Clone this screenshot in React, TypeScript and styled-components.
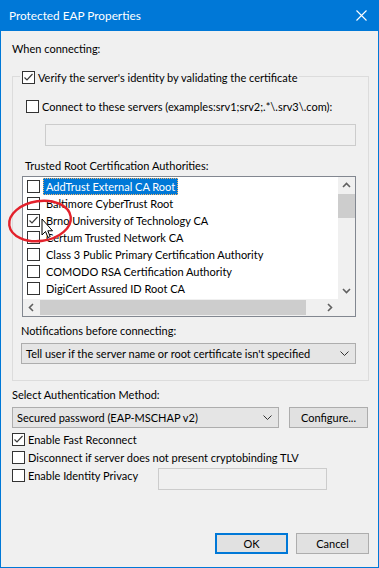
import styled, { createGlobalStyle } from "styled-components";

const GlobalStyle = createGlobalStyle`
  html, body {
    margin: 0;
    padding: 0;
    background: #f0f0f0;
  }
  body {
    font-family: Lato, "Liberation Sans", Arial, sans-serif;
    font-size: 11px;
    color: #000;
  }
  * { box-sizing: border-box; }
`;

const Window = styled.div`
  position: relative;
  width: 379px;
  height: 568px;
  border: 1px solid #0078d7;
  border-top: none;
  background: #f0f0f0;
  display: flex;
  flex-direction: column;
  overflow: hidden;
`;

const TitleBar = styled.div`
  height: 31px;
  background: #0078d7;
  color: #fff;
  display: flex;
  align-items: center;
  justify-content: space-between;
  padding: 0 11px 0 8px;
  font-size: 11.8px;
`;

const Body = styled.div`
  flex: 1;
  display: flex;
  flex-direction: column;
  padding: 0 9px 13px 11px;
`;

const Label = styled.div<{ $mt?: number; $ml?: number }>`
  height: 16px;
  line-height: 16px;
  white-space: nowrap;
  margin-top: ${(p) => p.$mt ?? 0}px;
  margin-left: ${(p) => p.$ml ?? 0}px;
`;

const GroupBox = styled.div`
  position: relative;
  margin-top: 19px;
  border: 1px solid #dcdcdc;
  padding: 0 12px 16px 8px;
  display: flex;
  flex-direction: column;
`;

/* legend sits over the group border */
const Legend = styled.div`
  position: absolute;
  top: -8px;
  left: 7px;
  padding: 0 2px;
  background: #f0f0f0;
`;

const CheckRow = styled.label<{ $mt?: number; $ml?: number; $w?: number }>`
  display: flex;
  align-items: center;
  gap: 2px;
  height: 16px;
  white-space: nowrap;
  flex-shrink: 0;
  margin-top: ${(p) => p.$mt ?? 0}px;
  margin-left: ${(p) => p.$ml ?? 0}px;
  ${(p) => (p.$w ? `width: ${p.$w}px;` : "")}
`;

const Box = styled.span`
  width: 13px;
  height: 13px;
  flex-shrink: 0;
  border: 1px solid #333;
  background: #fff;
  display: flex;
  align-items: center;
  justify-content: center;
  margin-right: 1px;
`;

const TextField = styled.div<{ $w: number; $mt?: number; $ml?: number }>`
  width: ${(p) => p.$w}px;
  height: 22px;
  flex-shrink: 0;
  border: 1px solid #cccccc;
  background: #f0f0f0;
  margin-top: ${(p) => p.$mt ?? 0}px;
  margin-left: ${(p) => p.$ml ?? 0}px;
`;

const ListBox = styled.div`
  width: 334px;
  height: 141px;
  margin-top: 2px;
  margin-left: 1px;
  border: 1px solid #828790;
  background: #fff;
  display: grid;
  grid-template-columns: 1fr 17px;
  grid-template-rows: 1fr 17px;
`;

const Items = styled.div`
  overflow: hidden;
  padding: 1px 0 0 4px;
`;

const Item = styled.div`
  height: 17px;
  display: flex;
  align-items: center;
  white-space: nowrap;
`;

const ItemText = styled.span<{ $selected?: boolean }>`
  margin-left: 2px;
  padding: 0 2px;
  height: 17px;
  line-height: 15px;
  border: 1px ${(p) => (p.$selected ? "dotted #f5b66a" : "solid transparent")};
  background: ${(p) => (p.$selected ? "#0078d7" : "transparent")};
  color: ${(p) => (p.$selected ? "#fff" : "#000")};
`;

const VScroll = styled.div`
  background: #f0f0f0;
  display: flex;
  flex-direction: column;
`;

const HScroll = styled.div`
  background: #f0f0f0;
  display: flex;
`;

const Arrow = styled.div`
  width: 17px;
  height: 17px;
  flex-shrink: 0;
  display: flex;
  align-items: center;
  justify-content: center;
`;

const Thumb = styled.div<{ $len: number; $vertical?: boolean }>`
  background: #cdcdcd;
  flex-shrink: 0;
  ${(p) =>
    p.$vertical
      ? `height: ${p.$len}px; width: 17px;`
      : `width: ${p.$len}px; height: 15px; margin-top: 1px;`}
`;

const Spacer = styled.div`
  flex: 1;
`;

const Corner = styled.div`
  background: #f0f0f0;
`;

const Combo = styled.div<{ $w: number; $mt?: number }>`
  width: ${(p) => p.$w}px;
  height: 21px;
  flex-shrink: 0;
  margin-top: ${(p) => p.$mt ?? 0}px;
  border: 1px solid #adadad;
  background: #e5e5e5;
  display: flex;
  align-items: center;
  justify-content: space-between;
  padding: 0 6px 0 4px;
  white-space: nowrap;
`;

const Row = styled.div<{ $mt?: number }>`
  display: flex;
  align-items: flex-start;
  gap: 10px;
  margin-top: ${(p) => p.$mt ?? 0}px;
`;

const Button = styled.div<{ $w: number; $default?: boolean }>`
  width: ${(p) => p.$w}px;
  height: 21px;
  flex-shrink: 0;
  display: flex;
  align-items: center;
  justify-content: center;
  background: #e1e1e1;
  border: ${(p) => (p.$default ? "2px solid #0078d7" : "1px solid #adadad")};
`;

const Footer = styled.div`
  margin-top: auto;
  display: flex;
  justify-content: flex-end;
  gap: 8px;
`;

const Markup = styled.svg`
  position: absolute;
  left: 0;
  top: 0;
  pointer-events: none;
`;

const Check = ({ checked }: { checked?: boolean }) => (
  <Box>
    {checked && (
      <svg width="11" height="11" viewBox="0 0 11 11">
        <path d="M1.5 5.5 L4 8 L9.5 2" fill="none" stroke="#3c3c3c" strokeWidth="1.2" />
      </svg>
    )}
  </Box>
);

const Chevron = ({ dir, color = "#606060" }: { dir: "up" | "down" | "left" | "right"; color?: string }) => {
  const d = {
    up: "M1 6 L4.5 2.5 L8 6",
    down: "M1 3 L4.5 6.5 L8 3",
    left: "M6 1 L2.5 4.5 L6 8",
    right: "M3 1 L6.5 4.5 L3 8",
  }[dir];
  return (
    <svg width="9" height="9" viewBox="0 0 9 9">
      <path d={d} fill="none" stroke={color} strokeWidth="1.6" />
    </svg>
  );
};

const ComboArrow = () => (
  <svg width="9" height="5" viewBox="0 0 9 5">
    <path d="M0.5 0.5 L4.5 4.5 L8.5 0.5" fill="none" stroke="#333" strokeWidth="1" />
  </svg>
);

const cas = [
  { name: "AddTrust External CA Root", checked: false, selected: true },
  { name: "Baltimore CyberTrust Root", checked: false },
  { name: "Brno University of Technology CA", checked: true },
  { name: "Certum Trusted Network CA", checked: false },
  { name: "Class 3 Public Primary Certification Authority", checked: false },
  { name: "COMODO RSA Certification Authority", checked: false },
  { name: "DigiCert Assured ID Root CA", checked: false },
];

export default function App() {
  return (
    <>
      <GlobalStyle />
      <Window>
        <TitleBar>
          <span>Protected EAP Properties</span>
          <svg width="11" height="11" viewBox="0 0 11 11">
            <path d="M0.5 0.5 L10.5 10.5 M10.5 0.5 L0.5 10.5" stroke="#fff" strokeWidth="1.1" />
          </svg>
        </TitleBar>
        <Body>
          <Label $mt={10}>When connecting:</Label>
          <GroupBox>
            <Legend>
              <CheckRow>
                <Check checked />
                Verify the server's identity by validating the certificate
              </CheckRow>
            </Legend>
            <CheckRow $mt={21} $ml={5}>
              <Check />
              Connect to these servers (examples:srv1;srv2;.*\.srv3\.com):
            </CheckRow>
            <TextField $w={311} $mt={10} $ml={24} />
            <Label $mt={12} $ml={4}>Trusted Root Certification Authorities:</Label>
            <ListBox>
              <Items>
                {cas.map((c) => (
                  <Item key={c.name}>
                    <Check checked={c.checked} />
                    <ItemText $selected={c.selected}>{c.name}</ItemText>
                  </Item>
                ))}
              </Items>
              <VScroll>
                <Arrow><Chevron dir="up" /></Arrow>
                <Thumb $vertical $len={24} />
                <Spacer />
                <Arrow><Chevron dir="down" /></Arrow>
              </VScroll>
              <HScroll>
                <Arrow><Chevron dir="left" /></Arrow>
                <Thumb $len={266} />
                <Spacer />
                <Arrow><Chevron dir="right" /></Arrow>
              </HScroll>
              <Corner />
            </ListBox>
            <Label $mt={6}>Notifications before connecting:</Label>
            <Combo $w={335} $mt={4}>
              Tell user if the server name or root certificate isn't specified
              <ComboArrow />
            </Combo>
          </GroupBox>
          <Label $mt={6}>Select Authentication Method:</Label>
          <Row $mt={4}>
            <Combo $w={267}>
              Secured password (EAP-MSCHAP v2)
              <ComboArrow />
            </Combo>
            <Button $w={79}>Configure...</Button>
          </Row>
          <CheckRow $mt={3}>
            <Check checked />
            Enable Fast Reconnect
          </CheckRow>
          <CheckRow $mt={2}>
            <Check />
            Disconnect if server does not present cryptobinding TLV
          </CheckRow>
          <Row $mt={2}>
            <CheckRow $w={136}>
              <Check />
              Enable Identity Privacy
            </CheckRow>
            <TextField $w={169} $mt={1} />
          </Row>
          <Footer>
            <Button $w={73} $default>OK</Button>
            <Button $w={73}>Cancel</Button>
          </Footer>
        </Body>
        <Markup width="379" height="568" viewBox="0 0 379 568">
          <ellipse cx="39" cy="221" rx="31" ry="20" fill="none" stroke="#e3212b" strokeWidth="2.4" transform="rotate(-8 39 221)" />
          <path
            d="M41 219 L41 235 L44.5 231.5 L47 237.5 L49.2 236.6 L46.8 230.8 L51.5 230.8 Z"
            fill="#fff"
            stroke="#000"
            strokeWidth="1"
            strokeLinejoin="round"
          />
        </Markup>
      </Window>
    </>
  );
}
